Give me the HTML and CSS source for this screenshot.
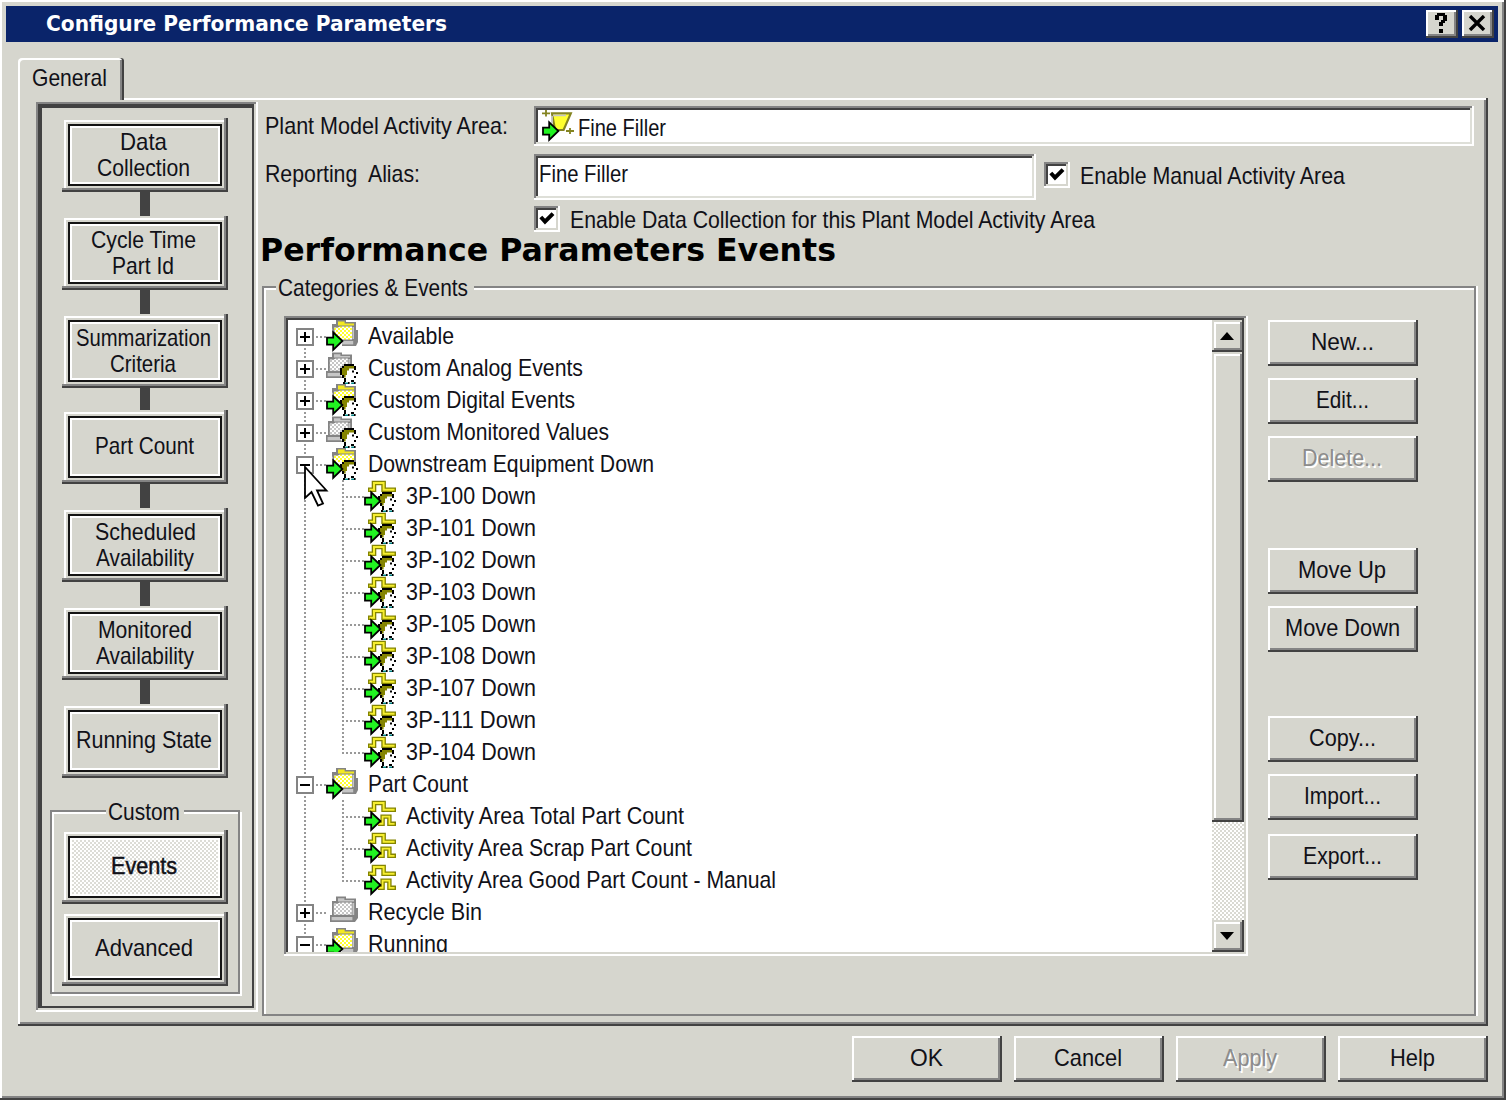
FILE: index.html
```html
<!DOCTYPE html>
<html lang="en">
<head>
<meta charset="utf-8">
<title>Configure Performance Parameters</title>
<link rel="stylesheet" href="styles.css">
</head>
<body>
<svg class="defs" width="0" height="0" aria-hidden="true">
  <defs>
    <pattern id="hatch-y" width="2" height="2" patternUnits="userSpaceOnUse"><path fill="#fff" d="M0 0h2v2H0z"/><path fill="#ffff30" d="M0 0h1v1H0zM1 1h1v1H1z"/></pattern>
    <pattern id="hatch-g" width="2" height="2" patternUnits="userSpaceOnUse"><path fill="#fff" d="M0 0h2v2H0z"/><path fill="#c6c6c6" d="M0 0h1v1H0zM1 1h1v1H1z"/></pattern>
    <symbol id="arrow" viewBox="0 0 16 16">
      <path d="M.5 8.8H3.6V6.2L8.2 10.5 3.6 14.9V12.3H.5Z" fill="#21f321" stroke="#000" stroke-width=".9"/>
    </symbol>
    <symbol id="head" viewBox="0 0 16 16">
      <path fill="#fff" d="M9 7h5l1.500 3-1 5H9.500l-2-3z"/>
      <path fill="#000" d="M9 6h5v1H9zM8 7h1v1H8zM7 8h1v3.500H7zM8 11.500h1V13H8zM9 13h1v2H9zM14 7h1v2h-1zM15 10h1v1h-1zM14 12h1v1h-1zM12.500 14h1.500v1h-1.500zM13 9.300h1v1h-1z"/>
      <path fill="#848400" d="M9 7h5v1.200h-2.500v1h-1v2.300H9.800v1.300H9v-1.300H8V8h1z"/>
      <path fill="#000" d="M8.500 15h1v1h-1zM11 15h.8v1H11zM14 15h.8v1H14z"/>
      <path fill="#008484" d="M9.500 15.200H11v.8H9.500zM12.600 15.200H14v.8h-1.400z"/>
    </symbol>
    <symbol id="folder-y" viewBox="0 0 16 16">
      <path fill="#848484" d="M14 5h2v6l-1 2H8v-3h6z"/>
      <path fill="#c6c6c6" d="M8 10.500h5.600v1.700H8z"/>
      <path fill="#848484" d="M5 0h5v1h5v9.500H4L3 4V2h2z"/>
      <path fill="#f3e921" d="M6 .8h3.300v1H14v.9H6z"/>
      <path fill="#c6c6c6" d="M13.200 3.500h.8v6h-.8z"/>
      <path fill="url(#hatch-y)" d="M4 3.800h2l1-.6h6v6.500H5z"/>
    </symbol>
    <symbol id="folder-g" viewBox="0 0 16 16">
      <path fill="#848484" d="M3 .3h5v1h5V10h-1v3H0V9.500h1V2.500h2z"/>
      <path fill="#c6c6c6" d="M4 1.100h3.200v.9H12v.8H4zM.8 10.500h10.400v1.600H.8z"/>
      <path fill="#c6c6c6" d="M11.200 3.500h.9v6h-.9z"/>
      <path fill="url(#hatch-g)" d="M1.900 3.800h2l1-.6h6v6.200H1.900z"/>
    </symbol>
    <symbol id="pulse" viewBox="0 0 16 16">
      <path fill="none" stroke="#848400" stroke-width="2.300" d="M2 4.900H5V1.500H9.800V4.900H16"/>
      <path fill="none" stroke="#f6ee30" stroke-width="1" d="M2.700 4.900H5V1.500H9.800V4.900H15.300"/>
    </symbol>
    <symbol id="pulse-low" viewBox="0 0 16 16">
      <path fill="none" stroke="#848400" stroke-width="2.200" d="M7 11.900H9.300V8.300H12.700V11.900H16"/>
      <path fill="none" stroke="#f6ee30" stroke-width=".9" d="M7 11.900H9.300V8.300H12.700V11.900H15.300"/>
    </symbol>
    <symbol id="i-avail" viewBox="0 0 16 16"><use href="#folder-y"/><use href="#arrow"/></symbol>
    <symbol id="i-grayuser" viewBox="0 0 16 16"><use href="#folder-g"/><use href="#head"/></symbol>
    <symbol id="i-useravail" viewBox="0 0 16 16"><path fill="#fff" d="M2 2h13v12H2z"/><path fill="#848484" d="M5 0h5v1h5v6H4L3 4V2h2z"/><path fill="#f3e921" d="M6 .8h3.300v1H14v.9H6z"/><path fill="url(#hatch-y)" d="M4 3.800h2l1-.6h7V7H4z"/><use href="#head"/><use href="#arrow"/></symbol>
    <symbol id="i-event" viewBox="0 0 16 16"><use href="#pulse"/><use href="#head"/><use href="#arrow"/></symbol>
    <symbol id="i-count" viewBox="0 0 16 16"><use href="#pulse"/><use href="#pulse-low"/><use href="#arrow"/></symbol>
    <symbol id="i-bin" viewBox="0 0 16 16"><path fill="#848484" d="M14 3h1v3h1v5l-1.500 2H12V3z"/><use href="#folder-g" x="2"/></symbol>
    <symbol id="i-area" viewBox="0 0 16 16">
      <path d="M5 1.700H14.400L10.800 10H6.500z" fill="#ffff30" stroke="#848421" stroke-width="1.100"/>
      <path d="M5.500 2.700H12M5 3v3.500" stroke="#c6c6c6" stroke-width=".9"/>
      <path d="M0 1.700h4M2 0v3.200M12 10.500h4M14 9v3" stroke="#848421" stroke-width=".9"/>
      <use href="#arrow"/>
    </symbol>
  </defs>
</svg>

<div class="window">
  <header class="titlebar">
    <span class="t title" data-w="401">Configure Performance Parameters</span>
    <span class="caption-btn"><svg width="18" height="20" viewBox="0 0 9 10"><path fill="#000" d="M2.500 0h4v1h1v3h-1v1h-1v1.500h-2V4.500h1v-1h1V1.500H3.500V3.500h-2V1h1zM3.500 8h2v2h-2z"/></svg></span>
    <span class="caption-btn"><svg width="18" height="16" viewBox="0 0 9 8"><path d="M1 .5 8 7.500M8 .5 1 7.500" stroke="#000" stroke-width="1.700"/></svg></span>
  </header>

  <div class="tab"><span class="t" data-w="75">General</span></div>
  <section class="panel">
    <nav class="sidebar">
      <div class="step"><div><span class="t" data-w="47">Data</span><span class="t" data-w="93">Collection</span></div></div>
      <i class="link"></i>
      <div class="step"><div><span class="t" data-w="105">Cycle Time</span><span class="t" data-w="62">Part Id</span></div></div>
      <i class="link"></i>
      <div class="step"><div><span class="t" data-w="135">Summarization</span><span class="t" data-w="66">Criteria</span></div></div>
      <i class="link short"></i>
      <div class="step single"><div><span class="t" data-w="99">Part Count</span></div></div>
      <i class="link"></i>
      <div class="step low"><div><span class="t" data-w="101">Scheduled</span><span class="t" data-w="98">Availability</span></div></div>
      <i class="link"></i>
      <div class="step low"><div><span class="t" data-w="94">Monitored</span><span class="t" data-w="98">Availability</span></div></div>
      <i class="link"></i>
      <div class="step single"><div><span class="t" data-w="136">Running State</span></div></div>
      <div class="group custom">
        <div class="legend"><span class="t" data-w="72">Custom</span></div>
        <div class="step single active"><div><span class="t" data-w="66">Events</span></div></div>
        <div class="step single"><div><span class="t" data-w="98">Advanced</span></div></div>
      </div>
    </nav>

    <main class="main">
      <div class="row area">
        <label><span class="t" data-w="243">Plant Model Activity Area:</span></label>
        <div class="field"><svg class="icon"><use href="#i-area"/></svg><span class="t" data-w="88">Fine Filler</span></div>
      </div>
      <div class="row alias">
        <label><span class="t" data-w="155">Reporting  Alias:</span></label>
        <div class="field"><span class="t" data-w="89">Fine Filler</span></div>
        <div class="check"><i class="box"><svg width="16" height="14" viewBox="0 0 8 7"><path d="M.9 2.500 3 4.800 7 .8" fill="none" stroke="#000" stroke-width="2"/></svg></i><span class="t" data-w="265">Enable Manual Activity Area</span></div>
      </div>
      <div class="row collect">
        <div class="check"><i class="box"><svg width="16" height="14" viewBox="0 0 8 7"><path d="M.9 2.500 3 4.800 7 .8" fill="none" stroke="#000" stroke-width="2"/></svg></i><span class="t" data-w="525">Enable Data Collection for this Plant Model Activity Area</span></div>
      </div>
      <h1><span class="t" data-w="576">Performance Parameters Events</span></h1>

      <div class="group categories">
        <div class="legend"><span class="t" data-w="190">Categories &amp; Events</span></div>
        <div class="body">
          <div class="list">
            <div class="tree">
              <div class="node first"><span class="g"><i class="plus"></i></span><svg class="icon"><use href="#i-avail"/></svg><span class="t" data-w="86">Available</span></div>
              <div class="node"><span class="g"><i class="plus"></i></span><svg class="icon"><use href="#i-grayuser"/></svg><span class="t" data-w="215">Custom Analog Events</span></div>
              <div class="node"><span class="g"><i class="plus"></i></span><svg class="icon"><use href="#i-useravail"/></svg><span class="t" data-w="207">Custom Digital Events</span></div>
              <div class="node"><span class="g"><i class="plus"></i></span><svg class="icon"><use href="#i-grayuser"/></svg><span class="t" data-w="241">Custom Monitored Values</span></div>
              <div class="node"><span class="g"><i class="minus"></i></span><svg class="icon"><use href="#i-useravail"/></svg><span class="t" data-w="286">Downstream Equipment Down</span>
                <svg class="cursor" width="26" height="44" viewBox="0 0 26 44"><path d="M2 2V33L8.500 27 15 40.500 20 38.500 14 25.500H23.500Z" fill="#fff" stroke="#000" stroke-width="1.800"/></svg>
              </div>
              <div class="node"><span class="g line"></span><span class="g"></span><svg class="icon"><use href="#i-event"/></svg><span class="t" data-w="130">3P-100 Down</span></div>
              <div class="node"><span class="g line"></span><span class="g"></span><svg class="icon"><use href="#i-event"/></svg><span class="t" data-w="130">3P-101 Down</span></div>
              <div class="node"><span class="g line"></span><span class="g"></span><svg class="icon"><use href="#i-event"/></svg><span class="t" data-w="130">3P-102 Down</span></div>
              <div class="node"><span class="g line"></span><span class="g"></span><svg class="icon"><use href="#i-event"/></svg><span class="t" data-w="130">3P-103 Down</span></div>
              <div class="node"><span class="g line"></span><span class="g"></span><svg class="icon"><use href="#i-event"/></svg><span class="t" data-w="130">3P-105 Down</span></div>
              <div class="node"><span class="g line"></span><span class="g"></span><svg class="icon"><use href="#i-event"/></svg><span class="t" data-w="130">3P-108 Down</span></div>
              <div class="node"><span class="g line"></span><span class="g"></span><svg class="icon"><use href="#i-event"/></svg><span class="t" data-w="130">3P-107 Down</span></div>
              <div class="node"><span class="g line"></span><span class="g"></span><svg class="icon"><use href="#i-event"/></svg><span class="t" data-w="130">3P-111 Down</span></div>
              <div class="node"><span class="g line"></span><span class="g end"></span><svg class="icon"><use href="#i-event"/></svg><span class="t" data-w="130">3P-104 Down</span></div>
              <div class="node"><span class="g"><i class="minus"></i></span><svg class="icon"><use href="#i-avail"/></svg><span class="t" data-w="100">Part Count</span></div>
              <div class="node"><span class="g line"></span><span class="g"></span><svg class="icon"><use href="#i-count"/></svg><span class="t" data-w="278">Activity Area Total Part Count</span></div>
              <div class="node"><span class="g line"></span><span class="g"></span><svg class="icon"><use href="#i-count"/></svg><span class="t" data-w="286">Activity Area Scrap Part Count</span></div>
              <div class="node"><span class="g line"></span><span class="g end"></span><svg class="icon"><use href="#i-count"/></svg><span class="t" data-w="370">Activity Area Good Part Count - Manual</span></div>
              <div class="node"><span class="g"><i class="plus"></i></span><svg class="icon"><use href="#i-bin"/></svg><span class="t" data-w="114">Recycle Bin</span></div>
              <div class="node"><span class="g"><i class="minus"></i></span><svg class="icon"><use href="#i-avail"/></svg><span class="t" data-w="80">Running</span></div>
            </div>
            <div class="scrollbar">
              <span class="sb"><svg width="14" height="8" viewBox="0 0 14 8"><path d="M7 0 14 8H0z"/></svg></span>
              <span class="sb thumb"></span>
              <span class="track"></span>
              <span class="sb"><svg width="14" height="8" viewBox="0 0 14 8"><path d="M0 0H14L7 8z"/></svg></span>
            </div>
          </div>
          <div class="actions">
            <button><span class="t" data-w="63">New...</span></button>
            <button><span class="t" data-w="53">Edit...</span></button>
            <button class="off"><span class="t" data-w="80">Delete...</span></button>
            <button class="gap-move"><span class="t" data-w="88">Move Up</span></button>
            <button><span class="t" data-w="115">Move Down</span></button>
            <button class="gap-copy"><span class="t" data-w="67">Copy...</span></button>
            <button><span class="t" data-w="77">Import...</span></button>
            <button class="gap-export"><span class="t" data-w="79">Export...</span></button>
          </div>
        </div>
      </div>
    </main>
  </section>

  <footer>
    <button><span class="t" data-w="33">OK</span></button>
    <button><span class="t" data-w="68">Cancel</span></button>
    <button class="off"><span class="t" data-w="54">Apply</span></button>
    <button><span class="t" data-w="45">Help</span></button>
  </footer>
</div>
<script src="fit.js"></script>
</body>
</html>
```
FILE: styles.css
```css
:root {
  --face: #d6d6ce;
  --shadow: #848484;
  --dark: #424242;
}
* { box-sizing: border-box; }
body {
  margin: 0;
  width: 1506px;
  height: 1100px;
  overflow: hidden;
  background: var(--face);
  color: #111118;
  font: 24px/26px "Liberation Sans", Arial, sans-serif;
}
.defs { position: absolute; }
.t { display: inline-block; flex: none; white-space: pre; transform-origin: 0 50%; }
.window {
  width: 1506px;
  height: 1100px;
  padding: 6px 8px 0 6px;
  box-shadow: inset -2px -2px var(--dark), inset 2px 2px #fff, inset -4px -4px var(--shadow);
}

/* Title bar */
.titlebar {
  height: 36px;
  background: #0a246a;
  display: flex;
  align-items: center;
  padding: 0 4px 1px 40px;
  gap: 4px;
}
.title {
  margin-right: auto;
  padding-top: 1px;
  color: #fff;
  font: bold 22px/30px "DejaVu Sans", Verdana, sans-serif;
}
.caption-btn {
  width: 32px;
  height: 28px;
  display: flex;
  align-items: center;
  justify-content: center;
  padding: 0 2px 2px 0;
  background: var(--face);
  box-shadow: inset -2px -2px var(--dark), inset 2px 2px #fff, inset -4px -4px var(--shadow);
}

/* Tab and page frame */
.tab {
  position: relative;
  width: 106px;
  height: 42px;
  margin: 16px 0 -2px 12px;
  padding: 7px 0 0 14px;
  background: var(--face);
  border-radius: 4px 3px 0 0;
  box-shadow: inset -2px 0 var(--dark), inset 2px 2px #fff, inset -4px 0 var(--shadow);
}
.panel {
  width: 1470px;
  height: 928px;
  margin-left: 12px;
  padding: 4px 0 0 18px;
  display: flex;
  box-shadow: inset -2px -2px var(--dark), inset 2px 2px #fff, inset -4px -4px var(--shadow);
}

/* Step navigation */
.sidebar {
  flex: none;
  width: 222px;
  height: 910px;
  padding: 16px 0 0 14px;
  box-shadow: inset -2px -2px #fff, inset 2px 2px var(--shadow), inset -4px -4px var(--face), inset 6px 6px var(--dark), inset -6px -6px var(--dark);
}
.step {
  width: 166px;
  height: 74px;
  margin-left: 12px;
  padding: 6px;
  box-shadow: inset -2px -2px var(--dark), inset -4px -4px var(--shadow), inset 2px 2px var(--face), inset 4px 4px #fff;
}
.step > div {
  height: 62px;
  border: 2px solid #141414;
  box-shadow: inset 0 0 0 2px #fff;
  display: flex;
  flex-direction: column;
  align-items: center;
  justify-content: center;
  padding-right: 4px;
}
.step.low > div { padding-right: 0; }
.step.single > div { padding: 0 2px 2px 0; }
.link { display: block; width: 10px; height: 24px; margin-left: 90px; background: var(--dark); }
.link.short { height: 22px; }
.active > div {
  background: repeating-conic-gradient(#fff 0 25%, #dcdcd6 0 50%) 0 0 / 4px 4px;
  -webkit-text-stroke: .5px #111118;
}

/* Etched groups */
.group { border: 2px solid var(--shadow); }
.legend { width: max-content; background: var(--face); }
.custom {
  width: 190px;
  height: 184px;
  margin-top: 32px;
  box-shadow: 2px 2px #fff, inset 2px 2px #fff;
}
.custom .legend { margin: -13px 0 5px 54px; padding: 0 4px 0 2px; height: 26px; }
.custom .step { margin: 0 0 8px 10px; }

/* Header fields */
.main { width: 1216px; margin-left: 4px; padding-top: 4px; }
.row { display: flex; }
.row label { width: 272px; padding-left: 3px; line-height: 40px; flex: none; }
.field {
  display: flex;
  background: #fff;
  box-shadow: inset -2px -2px #fff, inset 2px 2px var(--shadow), inset -4px -4px #dedfd8, inset 4px 4px var(--dark);
}
.area .field { width: 940px; height: 40px; padding: 4px 0 0 8px; line-height: 36px; }
.area .icon { margin-right: 4px; }
.alias { height: 46px; margin-top: 8px; }
.alias .field { width: 502px; padding-left: 5px; line-height: 40px; }
.check { display: flex; align-items: center; gap: 10px; }
.alias .check { height: 42px; margin-left: 8px; }
.alias .check .t { padding-top: 1px; }
.box {
  width: 26px;
  height: 26px;
  background: #fff;
  display: flex;
  align-items: center;
  justify-content: center;
  box-shadow: inset -2px -2px #fff, inset 2px 2px var(--shadow), inset -4px -4px var(--face), inset 4px 4px var(--dark);
}
.collect { height: 26px; margin: 6px 0 0 272px; }
.collect .t { padding-top: 1px; }
h1 { margin: 0 0 0 -2px; font: bold 32px/36px "DejaVu Sans", Verdana, sans-serif; color: #000; }

/* Categories group */
.categories { width: 1214px; height: 730px; margin-top: 18px; box-shadow: 2px 0 #fff, inset 2px 2px #fff; }
.categories .legend { margin: -13px 0 13px 12px; padding: 0 6px 0 2px; height: 28px; }
.categories .body { display: flex; margin-left: 20px; }
.list {
  width: 964px;
  height: 640px;
  padding: 4px;
  background: #fff;
  display: flex;
  box-shadow: inset -2px -2px #fff, inset 2px 2px var(--shadow), inset -4px -4px var(--face), inset 4px 4px var(--dark);
}
.tree { flex: 1; height: 632px; overflow: hidden; }
.node { position: relative; display: flex; height: 32px; line-height: 32px; }
.node .t { margin-left: 9.500px; }
.icon { width: 32px; height: 32px; flex: none; }
.g {
  flex: none;
  width: 38px;
  height: 32px;
  padding: 8px;
  background:
    repeating-linear-gradient(#999 0 2px, #fff 2px 4px) 16px 0 / 2px 32px no-repeat,
    repeating-linear-gradient(90deg, #999 0 2px, #fff 2px 4px) 16px 16px / 22px 2px no-repeat;
}
.g.line { background: repeating-linear-gradient(#999 0 2px, #fff 2px 4px) 16px 0 / 2px 32px no-repeat; }
.g.end {
  background:
    repeating-linear-gradient(#999 0 2px, #fff 2px 4px) 16px 0 / 2px 18px no-repeat,
    repeating-linear-gradient(90deg, #999 0 2px, #fff 2px 4px) 16px 16px / 22px 2px no-repeat;
}
.first .g { background-position: 16px 16px, 16px 16px; }
.plus, .minus {
  display: block;
  width: 18px;
  height: 18px;
  border: 2px solid var(--shadow);
  background: linear-gradient(#000, #000) center / 10px 2px no-repeat, #fff;
}
.plus {
  background: linear-gradient(#000, #000) center / 10px 2px no-repeat, linear-gradient(#000, #000) center / 2px 10px no-repeat, #fff;
}
.cursor { position: absolute; left: 15px; top: 17px; z-index: 2; }
.node:has(.cursor) { z-index: 1; }
.scrollbar { width: 32px; display: flex; flex-direction: column; }
.sb {
  height: 32px;
  display: flex;
  align-items: center;
  justify-content: center;
  padding-right: 2px;
  background: var(--face);
  box-shadow: inset -2px -2px var(--dark), inset 2px 2px var(--face), inset -4px -4px var(--shadow), inset 4px 4px #fff;
}
.thumb { height: 470px; }
.track { flex: 1; background: repeating-conic-gradient(#fff 0 25%, #d9d9d2 0 50%) 0 0 / 4px 4px; }

/* Push buttons */
button {
  width: 150px;
  height: 46px;
  padding: 0 2px 2px 0;
  border: 0;
  display: flex;
  align-items: center;
  justify-content: center;
  background: var(--face);
  color: inherit;
  font: inherit;
  box-shadow: inset -2px -2px var(--dark), inset 2px 2px #fff, inset -4px -4px var(--shadow);
}
.off { color: #8c8c8c; text-shadow: 2px 2px #fff; }
.actions { margin: 4px 0 0 20px; display: flex; flex-direction: column; gap: 12px; }
.gap-move { margin-top: 54px; }
.gap-copy { margin-top: 52px; }
.gap-export { margin-top: 2px; }
footer { display: flex; gap: 12px; margin: 10px 0 0 846px; }
```
FILE: fit.js
```js
// Condense each label horizontally to its designed width.
const labels = [...document.querySelectorAll(".t[data-w]")];
const natural = labels.map((el) => el.getBoundingClientRect().width);
labels.forEach((el, i) => {
  const w = Number(el.dataset.w);
  el.style.width = w + "px";
  el.style.transform = `scaleX(${w / natural[i]})`;
});
```
